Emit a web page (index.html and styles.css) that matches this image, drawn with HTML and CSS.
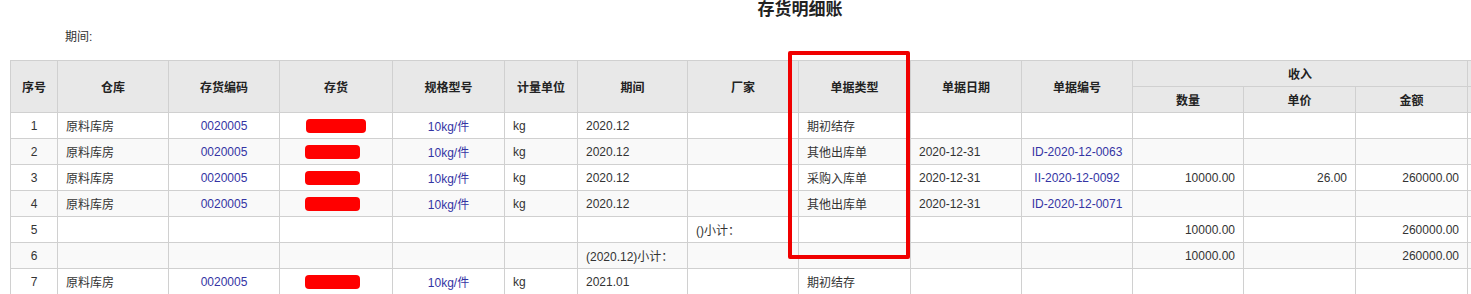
FILE: index.html
```html
<!DOCTYPE html>
<html lang="zh-CN">
<head>
    <meta charset="UTF-8">
    <title>存货明细账</title>
    <link rel="stylesheet" href="styles.css">
</head>
<body>
    <div class="sheet">
        <h1 class="title">存货明细账</h1>
        <div class="period">期间:</div>
        <div class="table-wrap">
            <table class="ledger">
                <colgroup>
                    <col style="width:47px"><col style="width:111px"><col style="width:111px"><col style="width:113px">
                    <col style="width:112px"><col style="width:73px"><col style="width:110px"><col style="width:111px">
                    <col style="width:112px"><col style="width:111px"><col style="width:111px"><col style="width:111px">
                    <col style="width:112px"><col style="width:112px"><col style="width:112px">
                </colgroup>
                <thead>
                    <tr>
                        <th rowspan="2">序号</th>
                        <th rowspan="2">仓库</th>
                        <th rowspan="2">存货编码</th>
                        <th rowspan="2">存货</th>
                        <th rowspan="2">规格型号</th>
                        <th rowspan="2">计量单位</th>
                        <th rowspan="2">期间</th>
                        <th rowspan="2">厂家</th>
                        <th rowspan="2">单据类型</th>
                        <th rowspan="2">单据日期</th>
                        <th rowspan="2">单据编号</th>
                        <th colspan="3">收入</th>
                        <th></th>
                    </tr>
                    <tr>
                        <th>数量</th>
                        <th>单价</th>
                        <th>金额</th>
                        <th></th>
                    </tr>
                </thead>
                <tbody>
                    <tr>
                        <td class="c">1</td>
                        <td>原料库房</td>
                        <td class="c link">0020005</td>
                        <td class="c"><span class="mask wide"></span></td>
                        <td class="c link">10kg/件</td>
                        <td>kg</td>
                        <td>2020.12</td>
                        <td></td>
                        <td>期初结存</td>
                        <td></td>
                        <td></td>
                        <td></td><td></td><td></td><td></td>
                    </tr>
                    <tr>
                        <td class="c">2</td>
                        <td>原料库房</td>
                        <td class="c link">0020005</td>
                        <td class="c"><span class="mask"></span></td>
                        <td class="c link">10kg/件</td>
                        <td>kg</td>
                        <td>2020.12</td>
                        <td></td>
                        <td>其他出库单</td>
                        <td>2020-12-31</td>
                        <td class="c link">ID-2020-12-0063</td>
                        <td></td><td></td><td></td><td></td>
                    </tr>
                    <tr>
                        <td class="c">3</td>
                        <td>原料库房</td>
                        <td class="c link">0020005</td>
                        <td class="c"><span class="mask"></span></td>
                        <td class="c link">10kg/件</td>
                        <td>kg</td>
                        <td>2020.12</td>
                        <td></td>
                        <td>采购入库单</td>
                        <td>2020-12-31</td>
                        <td class="c link">II-2020-12-0092</td>
                        <td class="r">10000.00</td>
                        <td class="r">26.00</td>
                        <td class="r">260000.00</td>
                        <td></td>
                    </tr>
                    <tr>
                        <td class="c">4</td>
                        <td>原料库房</td>
                        <td class="c link">0020005</td>
                        <td class="c"><span class="mask"></span></td>
                        <td class="c link">10kg/件</td>
                        <td>kg</td>
                        <td>2020.12</td>
                        <td></td>
                        <td>其他出库单</td>
                        <td>2020-12-31</td>
                        <td class="c link">ID-2020-12-0071</td>
                        <td></td><td></td><td></td><td></td>
                    </tr>
                    <tr>
                        <td class="c">5</td>
                        <td></td><td></td><td></td><td></td><td></td><td></td>
                        <td>()小计：</td>
                        <td></td><td></td><td></td>
                        <td class="r">10000.00</td>
                        <td></td>
                        <td class="r">260000.00</td>
                        <td></td>
                    </tr>
                    <tr>
                        <td class="c">6</td>
                        <td></td><td></td><td></td><td></td><td></td>
                        <td>(2020.12)小计：</td>
                        <td></td><td></td><td></td><td></td>
                        <td class="r">10000.00</td>
                        <td></td>
                        <td class="r">260000.00</td>
                        <td></td>
                    </tr>
                    <tr>
                        <td class="c">7</td>
                        <td>原料库房</td>
                        <td class="c link">0020005</td>
                        <td class="c"><span class="mask"></span></td>
                        <td class="c link">10kg/件</td>
                        <td>kg</td>
                        <td>2021.01</td>
                        <td></td>
                        <td>期初结存</td>
                        <td></td><td></td>
                        <td></td><td></td><td></td><td></td>
                    </tr>
                </tbody>
            </table>
            <div class="highlight"></div>
        </div>
    </div>
</body>
</html>
```

FILE: styles.css
```css
html, body {
    margin: 0;
    padding: 0;
    overflow: hidden;
    background: #fff;
}
body {
    font-family: "Liberation Sans", "Noto Sans CJK SC", sans-serif;
    font-size: 12px;
    color: #333;
}
.sheet {
    padding: 0 10px;
    width: 1580px;
}
.title {
    margin: 0;
    height: 22px;
    line-height: 20px;
    font-size: 17px;
    font-weight: bold;
    color: #222;
    text-align: center;
}
.period {
    height: 38px;
    line-height: 30px;
    padding-left: 55px;
    color: #333;
}
.table-wrap {
    position: relative;
}
.ledger {
    border-collapse: collapse;
    table-layout: fixed;
    width: 1569px;
}
.ledger th, .ledger td {
    border: 1px solid #d0d0d0;
    height: 25px;
    padding: 0 8px;
    white-space: nowrap;
    overflow: hidden;
    text-align: left;
}
.ledger th {
    background: #e8e8e8;
    color: #222;
    font-weight: bold;
    text-align: center;
}
.ledger tbody tr:nth-child(even) td {
    background: #f9f9f9;
}
.ledger td.c {
    text-align: center;
}
.ledger td.r {
    text-align: right;
}
.ledger td.link {
    color: #3434a4;
}
.mask {
    display: inline-block;
    width: 55px;
    height: 14px;
    background: #ff0000;
    border-radius: 4px;
    vertical-align: middle;
    margin-right: 8px;
}
.mask.wide {
    width: 60px;
    margin-right: 0;
}
.highlight {
    position: absolute;
    left: 778px;
    top: -9px;
    width: 114px;
    height: 200px;
    border: 4px solid #f00000;
    border-radius: 2px;
}
```
